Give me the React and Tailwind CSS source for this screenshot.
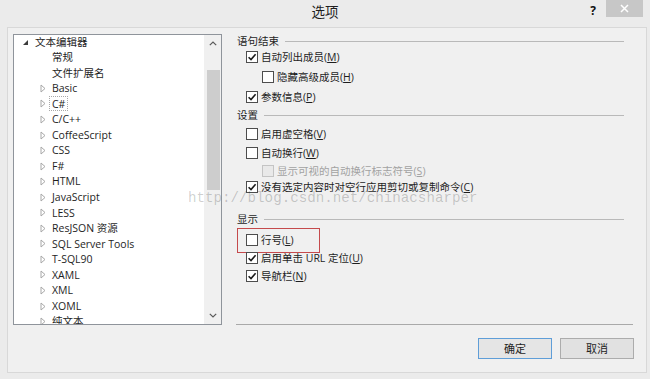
import React from "react";

function Check({ checked, disabled }) {
  return (
    <span
      className={
        "w-[12px] h-[12px] shrink-0 border flex items-center justify-center " +
        (disabled ? "border-[#c4c4c4] bg-[#e9e9e9]" : "border-[#4d4d4d] bg-white")
      }
    >
      {checked && (
        <svg width="10" height="10" viewBox="0 0 10 10">
          <path d="M1.6 5.2 L4 7.6 L8.6 2.2" fill="none" stroke="#1a1a1a" strokeWidth="1.6" />
        </svg>
      )}
    </span>
  );
}

function Opt({ label, m, checked, disabled, indent, mt, children }) {
  return (
    <div className={"relative h-[16px] flex items-center gap-[3px] " + (indent ? "pl-[26px] " : "pl-[10px] ") + mt}>
      <Check checked={checked} disabled={disabled} />
      <span className={"whitespace-nowrap " + (disabled ? "text-[#a2a2a2]" : "text-[#1e1e1e]")}>
        {label}(<span className="underline underline-offset-1">{m}</span>)
      </span>
      {children}
    </div>
  );
}

function Header({ label, mt }) {
  return (
    <div className={"h-[16px] flex items-center pl-[1px] pr-[9px] " + mt}>
      <span className="whitespace-nowrap text-[#1e1e1e]">{label}</span>
      <div className="flex-1 h-px bg-[#b9b9b9] ml-[6px]" />
    </div>
  );
}

const treeItems = [
  { t: "常规", exp: false },
  { t: "文件扩展名", exp: false },
  { t: "Basic", exp: true },
  { t: "C#", exp: true, sel: true },
  { t: "C/C++", exp: true },
  { t: "CoffeeScript", exp: true },
  { t: "CSS", exp: true },
  { t: "F#", exp: true },
  { t: "HTML", exp: true },
  { t: "JavaScript", exp: true },
  { t: "LESS", exp: true },
  { t: "ResJSON 资源", exp: true },
  { t: "SQL Server Tools", exp: true },
  { t: "T-SQL90", exp: true },
  { t: "XAML", exp: true },
  { t: "XML", exp: true },
  { t: "XOML", exp: true },
  { t: "纯文本", exp: true },
];

function Tree() {
  return (
    <div className="ml-[5px] mt-[6px] w-[209px] h-[291px] border border-[#8f949b] bg-white flex overflow-hidden">
      <div className="flex-1 -mt-px overflow-hidden">
        <div className="h-[15.55px] flex items-center pl-[6px]">
          <span className="w-[12px] flex pl-[3px] pt-[2px]">
            <svg width="5" height="5" viewBox="0 0 5 5">
              <path d="M5 0 L5 5 L0 5 Z" fill="#3c3c3c" />
            </svg>
          </span>
          <span className="border border-transparent px-[2px] text-[#1e1e1e] whitespace-nowrap">文本编辑器</span>
        </div>
        {treeItems.map((it) => (
          <div key={it.t} className="h-[15.55px] flex items-center pl-[24px]">
            <span className="w-[11px] flex pl-[2px]">
              {it.exp && (
                <svg width="6" height="9" viewBox="0 0 6 9">
                  <path d="M1 1 L5 4.5 L1 8 Z" fill="none" stroke="#a8a8a8" strokeWidth="1" />
                </svg>
              )}
            </span>
            <span
              className={
                "h-[15px] flex items-center px-[2px] border whitespace-nowrap text-[#1e1e1e] " +
                (it.sel ? "border-dotted border-[#a9a9a9]" : "border-transparent")
              }
            >
              {it.t}
            </span>
          </div>
        ))}
      </div>
      <div className="w-[17px] h-full bg-[#f0f0f0] flex flex-col">
        <div className="h-[17px] flex items-center justify-center">
          <svg width="8" height="5" viewBox="0 0 8 5">
            <path d="M0.8 4.2 L4 1 L7.2 4.2" fill="none" stroke="#5a5a5a" strokeWidth="1.2" />
          </svg>
        </div>
        <div className="mt-[18px] h-[120px] ml-[3px] mr-[1px] bg-[#cdcdcd]" />
        <div className="flex-1" />
        <div className="h-[17px] flex items-center justify-center">
          <svg width="8" height="5" viewBox="0 0 8 5">
            <path d="M0.8 0.8 L4 4 L7.2 0.8" fill="none" stroke="#5a5a5a" strokeWidth="1.2" />
          </svg>
        </div>
      </div>
    </div>
  );
}

export default function App() {
  return (
    <div className="relative w-[650px] h-[379px] overflow-hidden bg-[#ebebeb] font-['Open_Sans','Noto_Sans_CJK_SC',sans-serif] text-[10.5px] leading-none">
      {/* Title bar */}
      <div className="h-[27px] grid grid-cols-3">
        <div />
        <div className="flex items-center justify-center pb-[1px]">
          <span className="text-[13.5px] text-[#1e1e1e]">选项</span>
        </div>
        <div className="flex items-start justify-end pr-[7px] gap-[10px]">
          <span className="mt-[5px] text-[12px] font-bold text-[#111]">?</span>
          <div className="w-[37px] h-[17px] bg-[#c7c7c7] flex items-center justify-center">
            <svg width="9" height="9" viewBox="0 0 9 9">
              <path d="M1 1 L8 8 M8 1 L1 8" stroke="#ffffff" strokeWidth="1.5" />
            </svg>
          </div>
        </div>
      </div>

      {/* Panel */}
      <div className="ml-[7px] w-[640px] h-[346px] border border-[#d8d8d8] bg-[#f0f0f0] flex flex-col">
        <div className="h-[297px] flex">
          <Tree />
          <div className="ml-[14px] w-[397px] h-full flex flex-col border-b border-[#a9a9a9]">
            <Header label="语句结束" mt="mt-[5px]" />
            <Opt label="自动列出成员" m="M" checked mt="mt-0" />
            <Opt label="隐藏高级成员" m="H" indent mt="mt-[4px]" />
            <Opt label="参数信息" m="P" checked mt="mt-[4px]" />
            <Header label="设置" mt="mt-[2px]" />
            <Opt label="启用虚空格" m="V" mt="mt-[3px]" />
            <Opt label="自动换行" m="W" mt="mt-[3px]" />
            <Opt label="显示可视的自动换行标志符号" m="S" disabled indent mt="mt-[2px]" />
            <Opt label="没有选定内容时对空行应用剪切或复制命令" m="C" checked mt="mt-0" />
            <Header label="显示" mt="mt-[16px]" />
            <Opt label="行号" m="L" mt="mt-[5px]">
              <div className="absolute left-[1px] top-[-4px] w-[83px] h-[25px] border border-[#c54a4c]" />
            </Opt>
            <Opt label="启用单击 URL 定位" m="U" checked mt="mt-[2px]" />
            <Opt label="导航栏" m="N" checked mt="mt-[2px]" />
          </div>
        </div>
        <div className="mt-[13px] flex justify-end pr-[12px] gap-[8px]">
          <button className="w-[74px] h-[21px] border border-[#5f9ed8] bg-[#e5e5e5] text-[11px] text-[#1e1e1e] flex items-center justify-center">
            确定
          </button>
          <button className="w-[74px] h-[21px] border border-[#acacac] bg-[#e1e1e1] text-[11px] text-[#1e1e1e] flex items-center justify-center">
            取消
          </button>
        </div>
      </div>

      {/* Watermark */}
      <div className="absolute left-[188px] top-[191px] font-['Liberation_Mono',monospace] text-[14.2px] leading-none text-black/20 whitespace-nowrap pointer-events-none">
        http://blog.csdn.net/chinacsharper
      </div>
    </div>
  );
}
